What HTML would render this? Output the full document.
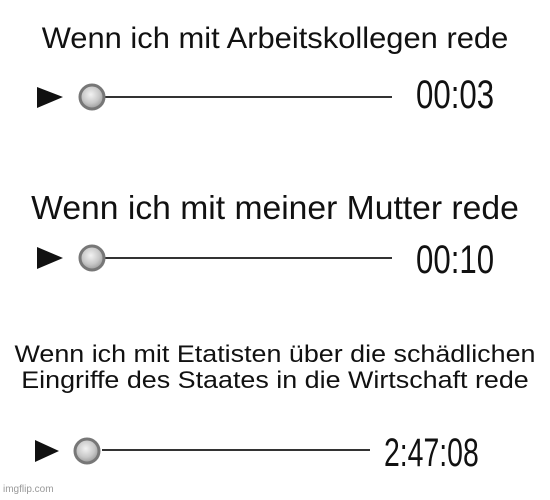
<!DOCTYPE html>
<html><head><style>
body{margin:0;width:550px;height:500px;background:#fff;position:relative;overflow:hidden;font-family:"Liberation Sans",sans-serif;}
.t{position:absolute;left:0;width:550px;text-align:center;color:#111;white-space:nowrap;}
.time{position:absolute;font-family:"Liberation Sans",sans-serif;font-size:40px;line-height:1;color:#111;transform-origin:left top;transform:scaleX(0.78);}
svg{position:absolute;left:0;top:0}
</style></head><body>
<div class="t" style="top:22px;font-size:30px;transform:scaleX(1.03);">Wenn ich mit Arbeitskollegen rede</div>
<div class="t" style="top:189px;font-size:33px;transform:scaleX(1.02);">Wenn ich mit meiner Mutter rede</div>
<div class="t" style="top:342px;font-size:24px;line-height:26px;transform:scaleX(1.12);">Wenn ich mit Etatisten über die schädlichen<br>Eingriffe des Staates in die Wirtschaft rede</div>
<svg width="550" height="500">
<defs><radialGradient id="g" cx="45%" cy="40%" r="60%"><stop offset="0" stop-color="#f2f2f2"/><stop offset="0.6" stop-color="#c8c8c8"/><stop offset="1" stop-color="#999"/></radialGradient></defs>
<g>
<polygon points="37,87 37,108 63,97" fill="#111"/>
<line x1="104" y1="97" x2="392" y2="97" stroke="#333" stroke-width="2"/>
<circle cx="92" cy="97" r="12" fill="url(#g)" stroke="#777" stroke-width="3"/>
</g>
<g>
<polygon points="37,247 37,269 63,258" fill="#111"/>
<line x1="104" y1="258" x2="392" y2="258" stroke="#333" stroke-width="2"/>
<circle cx="92" cy="258" r="12" fill="url(#g)" stroke="#777" stroke-width="3"/>
</g>
<g>
<polygon points="35,440 35,462 59,451" fill="#111"/>
<line x1="102" y1="450" x2="370" y2="450" stroke="#333" stroke-width="2"/>
<circle cx="87" cy="451" r="12" fill="url(#g)" stroke="#777" stroke-width="3"/>
</g>
</svg>
<div class="time" style="left:416px;top:75px;">00:03</div>
<div class="time" style="left:416px;top:240px;">00:10</div>
<div class="time" style="left:384px;top:433px;transform:scaleX(0.71);">2:47:08</div>
<div style="position:absolute;left:3px;top:484px;font-size:10px;color:#999;">imgflip.com</div>
</body></html>
